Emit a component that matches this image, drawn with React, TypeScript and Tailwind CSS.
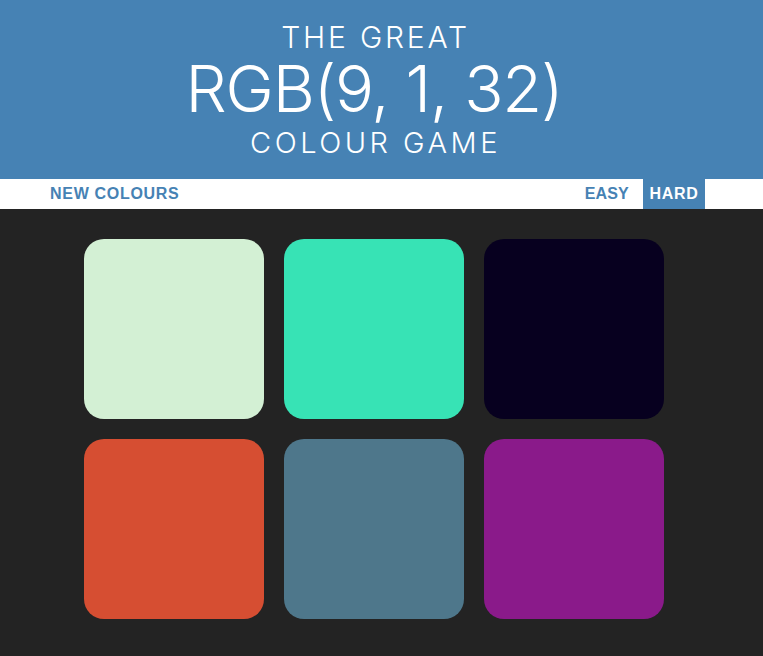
const SQUARES = [
  "#d3f0d4",
  "#37e3b5",
  "#07001f",
  "#d64e32",
  "#4e778b",
  "#8a1a8a",
]

export default function App() {
  return (
    <div className="min-h-[656px] bg-[#232323]">
      {/* Header */}
      <header
        className="h-[179px] bg-[#4682b4] text-white flex flex-col items-center pt-[19px] pr-[15px] font-light"
        style={{ fontFamily: "Inter, 'Noto Sans', sans-serif" }}
      >
        <span className="text-[30px] leading-[36px] tracking-[2.8px] pl-[3px]">THE GREAT</span>
        <span className="text-[65px] leading-[68px] tracking-[-1.2px]">RGB(9, 1, 32)</span>
        <span className="text-[29px] leading-[39px] tracking-[3.5px] pl-[3px]">COLOUR GAME</span>
      </header>

      {/* Stripe */}
      <nav
        className="h-[30px] bg-white flex justify-between items-stretch text-[16px] font-bold tracking-[0.7px] text-[#4682b4]"
        style={{ fontFamily: "'Liberation Sans', Arial, sans-serif" }}
      >
        <button className="ml-[44px] px-[6px] uppercase">New Colours</button>
        <div className="flex mr-[58px]">
          <button className="pl-[6px] pr-[14px] tracking-[0.2px] uppercase">Easy</button>
          <button className="w-[62px] uppercase bg-[#4682b4] text-white">Hard</button>
        </div>
      </nav>

      {/* Squares */}
      <main className="pl-[84px] pt-[30px]">
        <div className="grid grid-cols-[repeat(3,180px)] gap-5">
          {SQUARES.map((c) => (
            <div
              key={c}
              className="h-[180px] rounded-[20px]"
              style={{ backgroundColor: c }}
            />
          ))}
        </div>
      </main>
    </div>
  )
}
